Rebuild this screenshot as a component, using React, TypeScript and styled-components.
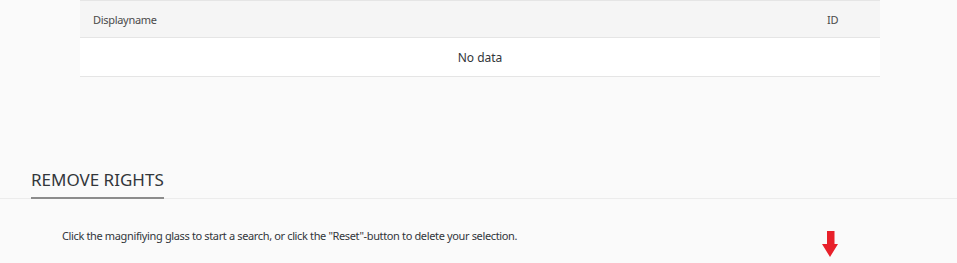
import styled, { createGlobalStyle } from "styled-components";

const GlobalStyle = createGlobalStyle`
   *, *::before, *::after {
      box-sizing: border-box;
   }
   html, body {
      margin: 0;
      padding: 0;
      background: #fafafa;
   }
   body {
      font-family: "Noto Sans", "Liberation Sans", Arial, sans-serif;
      color: #32363a;
   }
`;

const Page = styled.div`
   width: 957px;
   height: 263px;
   overflow: hidden;
   background: #fafafa;
`;

const TableWrap = styled.div`
   padding: 0 77px 0 80px;
`;

const Table = styled.div`
   border-top: 1px solid #e5e5e5;
   font-size: 11px;
`;

const Row = styled.div<{ $head?: boolean }>`
   display: flex;
   align-items: center;
   height: ${(p) => (p.$head ? "37px" : "39px")};
   background: ${(p) => (p.$head ? "#f5f5f5" : "#ffffff")};
   border-bottom: 1px solid #e5e5e5;
   color: ${(p) => (p.$head ? "#4a4a4a" : "#32363a")};
`;

const Cell = styled.div<{ $w?: string }>`
   flex: ${(p) => (p.$w ? `0 0 ${p.$w}` : "1")};
   padding-left: 13px;
   letter-spacing: -0.3px;
`;

const Empty = styled.div`
   flex: 1;
   text-align: center;
   font-size: 12px;
`;

const Section = styled.div`
   margin-top: 92px;
`;

const TitleBar = styled.div`
   border-bottom: 1px solid #ececec;
   padding-left: 31px;
   display: flex;
`;

const Title = styled.h2`
   margin: 0 0 -1px;
   font-size: 17px;
   font-weight: 400;
   line-height: 22px;
   padding-bottom: 6px;
   color: #32363a;
   border-bottom: 2px solid #8c8c8c;
`;

const Content = styled.div`
   display: flex;
   align-items: flex-start;
   padding: 29px 119px 0 62px;
`;

const Hint = styled.p`
   margin: 0;
   flex: 1;
   font-size: 11px;
   line-height: 16px;
   letter-spacing: -0.36px;
   color: #32363a;
`;

const Arrow = styled.svg`
   flex: 0 0 auto;
   margin-top: 3px;
`;

export default function App() {
   return (
      <Page>
         <GlobalStyle />
         <TableWrap>
            <Table>
               <Row $head>
                  <Cell>Displayname</Cell>
                  <Cell $w="66px">ID</Cell>
               </Row>
               <Row>
                  <Empty>No data</Empty>
               </Row>
            </Table>
         </TableWrap>
         <Section>
            <TitleBar>
               <Title>REMOVE RIGHTS</Title>
            </TitleBar>
            <Content>
               <Hint>
                  Click the magnifiying glass to start a search, or click the "Reset"-button to delete your selection.
               </Hint>
               <Arrow width="16" height="26" viewBox="0 0 16 26">
                  <path d="M5 0h7.5v13H16L8 26L0 13h5z" fill="#e8202a" />
               </Arrow>
            </Content>
         </Section>
      </Page>
   );
}
